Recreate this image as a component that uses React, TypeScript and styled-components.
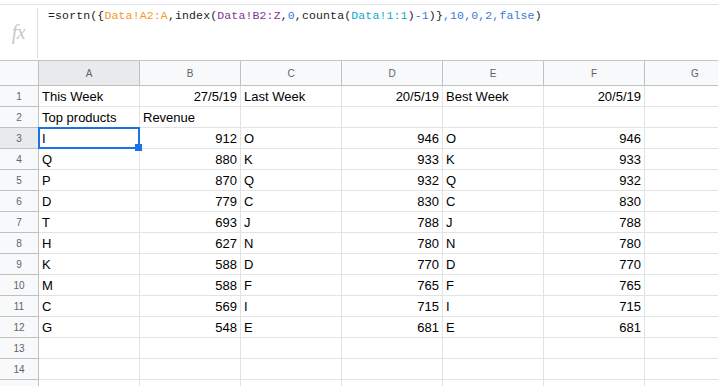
import React from "react";
import styled, { createGlobalStyle } from "styled-components";

const Global = createGlobalStyle`
  html, body { margin: 0; padding: 0; background: #fff; }
  #root { width: 718px; height: 386px; overflow: hidden; }
`;

const Page = styled.div`
  width: 718px;
  height: 386px;
  overflow: hidden;
  padding-top: 4px;
  box-sizing: border-box;
  font-family: "Liberation Sans", Arial, sans-serif;
`;

const FormulaBar = styled.div`
  display: flex;
  height: 57px;
  box-sizing: border-box;
  border-top: 1px solid #e1e3e6;
  border-bottom: 1px solid #c4c7c5;
`;

const FxBox = styled.div`
  width: 38px;
  flex: none;
  margin: 3px 0 2px;
  border-right: 1px solid #dadce0;
  display: flex;
  align-items: center;
  justify-content: center;
  font-family: "Liberation Serif", "Times New Roman", serif;
  font-style: italic;
  font-size: 20px;
  color: #c8c8c8;
  letter-spacing: -0.5px;
  padding-bottom: 2px;
  box-sizing: border-box;
`;

const FormulaText = styled.div`
  padding: 2px 0 0 10px;
  font-family: "Liberation Mono", "DejaVu Sans Mono", monospace;
  font-size: 11.5px;
  letter-spacing: 0.15px;
  line-height: 18px;
  color: #222;
  white-space: pre;
`;

const Tok = styled.span<{ $c: string }>`
  color: ${(p) => p.$c};
`;

const Grid = styled.div`
  display: grid;
  grid-template-columns: 39px repeat(7, 101px);
  grid-template-rows: 25px;
  grid-auto-rows: 21px;
`;

const Corner = styled.div`
  background: #f8f9fa;
  border-right: 1px solid #c0c0c0;
  border-bottom: 1px solid #c0c0c0;
  box-sizing: border-box;
`;

const ColHead = styled.div<{ $active?: boolean }>`
  background: ${(p) => (p.$active ? "#e8eaed" : "#f8f9fa")};
  border-right: 1px solid #c0c0c0;
  border-bottom: 1px solid #c0c0c0;
  box-sizing: border-box;
  display: flex;
  align-items: center;
  justify-content: center;
  font-family: "Liberation Sans", Arial, sans-serif;
  font-size: 10px;
  color: #5f6368;
  padding-top: 1px;
`;

const RowHead = styled.div<{ $active?: boolean }>`
  background: ${(p) => (p.$active ? "#e8eaed" : "#f8f9fa")};
  border-right: 1px solid #c0c0c0;
  border-bottom: 1px solid #c0c0c0;
  box-sizing: border-box;
  display: flex;
  align-items: center;
  justify-content: center;
  font-size: 10px;
  color: #5f6368;
`;

const Cell = styled.div<{ $right?: boolean }>`
  position: relative;
  border-right: 1px solid #e2e3e3;
  border-bottom: 1px solid #e2e3e3;
  box-sizing: border-box;
  display: flex;
  align-items: center;
  justify-content: ${(p) => (p.$right ? "flex-end" : "flex-start")};
  padding: 1px 3px 0 3px;
  font-size: 13px;
  color: #000;
  white-space: nowrap;
  overflow: visible;
`;

const Selection = styled.div`
  position: absolute;
  left: -1px;
  top: -1px;
  right: -1px;
  bottom: -1px;
  border: 2px solid #1a73e8;
  box-sizing: border-box;
  pointer-events: none;
  z-index: 2;
`;

const Handle = styled.div`
  position: absolute;
  right: -4px;
  bottom: -4px;
  width: 7px;
  height: 7px;
  background: #1a73e8;
  z-index: 3;
`;

const cols = ["A", "B", "C", "D", "E", "F", "G"];

type Row = (string | number | null)[];

const rows: Row[] = [
  ["This Week", "27/5/19", "Last Week", "20/5/19", "Best Week", "20/5/19", null],
  ["Top products", "Revenue", null, null, null, null, null],
  ["I", 912, "O", 946, "O", 946, null],
  ["Q", 880, "K", 933, "K", 933, null],
  ["P", 870, "Q", 932, "Q", 932, null],
  ["D", 779, "C", 830, "C", 830, null],
  ["T", 693, "J", 788, "J", 788, null],
  ["H", 627, "N", 780, "N", 780, null],
  ["K", 588, "D", 770, "D", 770, null],
  ["M", 588, "F", 765, "F", 765, null],
  ["C", 569, "I", 715, "I", 715, null],
  ["G", 548, "E", 681, "E", 681, null],
  [null, null, null, null, null, null, null],
  [null, null, null, null, null, null, null],
  [null, null, null, null, null, null, null],
];

const isRight = (v: string | number | null) =>
  typeof v === "number" || (typeof v === "string" && /^\d+\/\d+\/\d+$/.test(v));

const BLUE = "#3b78d8";
const DARK = "#222";

export default function App() {
  return (
    <>
      <Global />
      <Page>
        <FormulaBar>
          <FxBox>fx</FxBox>
          <FormulaText>
            <Tok $c={DARK}>=sortn({"{"}</Tok>
            <Tok $c="#f7981d">Data!A2:A</Tok>
            <Tok $c={DARK}>,index(</Tok>
            <Tok $c="#7e3794">Data!B2:Z</Tok>
            <Tok $c={DARK}>,</Tok>
            <Tok $c={BLUE}>0</Tok>
            <Tok $c={DARK}>,counta(</Tok>
            <Tok $c="#11a9cc">Data!1:1</Tok>
            <Tok $c={DARK}>)</Tok>
            <Tok $c={BLUE}>-1</Tok>
            <Tok $c={DARK}>){"}"}</Tok>
            <Tok $c={BLUE}>,10,0,2,false</Tok>
            <Tok $c={DARK}>)</Tok>
          </FormulaText>
        </FormulaBar>
        <Grid>
          <Corner />
          {cols.map((c) => (
            <ColHead key={c} $active={c === "A"}>
              {c}
            </ColHead>
          ))}
          {rows.map((r, i) => (
            <React.Fragment key={i}>
              <RowHead $active={i === 2}>{i + 1 < 15 ? i + 1 : ""}</RowHead>
              {r.map((v, j) => (
                <Cell key={j} $right={isRight(v)}>
                  {v}
                  {i === 2 && j === 0 && (
                    <Selection>
                      <Handle />
                    </Selection>
                  )}
                </Cell>
              ))}
            </React.Fragment>
          ))}
        </Grid>
      </Page>
    </>
  );
}
